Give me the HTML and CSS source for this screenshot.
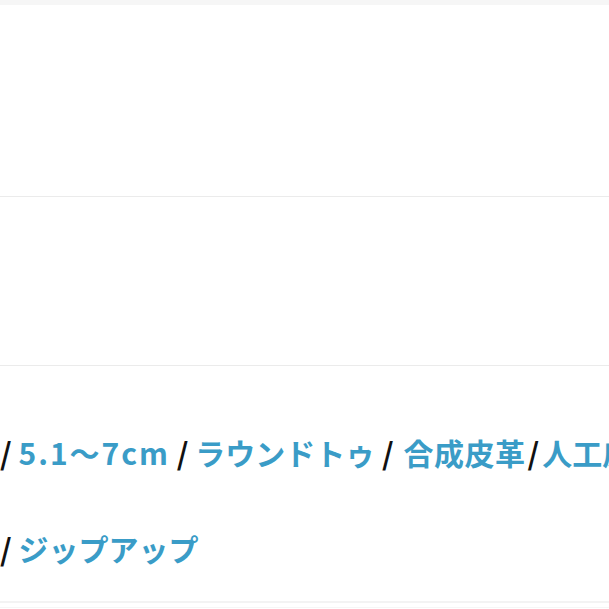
FILE: index.html
```html
<!DOCTYPE html>
<html lang="ja">
<head>
<meta charset="utf-8">
<link rel="stylesheet" href="styles.css">
</head>
<body>
<div class="topbar"></div>
<section class="block block-one"></section>
<section class="block block-two"></section>
<section class="specs">
  <p class="spec-line"><span class="sep">/</span> <span class="tag tag-latin">5.1〜7cm</span> <span class="sep">/</span> <span class="tag">ラウンドトゥ</span> <span class="sep">/</span> <span class="tag tag-wide">合成皮革</span><span class="sep sep-tight">/</span><span class="tag">人工皮革</span></p>
  <p class="spec-line"><span class="sep">/</span> <span class="tag">ジップアップ</span></p>
</section>
<div class="bottombar"></div>
<div class="bottomline"></div>
</body>
</html>
```
FILE: styles.css
```css
html, body {
  margin: 0;
  padding: 0;
  background: #ffffff;
  overflow: hidden;
}
body {
  width: 609px;
  height: 609px;
  font-family: "Noto Sans CJK JP", "Noto Sans", sans-serif;
}
.topbar {
  height: 5px;
  background: #f6f6f6;
}
.block {
  border-bottom: 1px solid #ebebeb;
}
.block-one {
  height: 191px;
}
.block-two {
  height: 168px;
}
.specs {
  height: 235px;
  overflow: hidden;
}
.spec-line {
  margin: 0;
  white-space: nowrap;
  font-size: 30px;
  font-weight: 700;
  line-height: 40px;
  color: #111111;
}
.spec-line:first-child {
  margin-top: 66px;
}
.spec-line + .spec-line {
  margin-top: 56px;
}
.tag {
  color: #3a9cc7;
}
.tag-latin {
  letter-spacing: 2px;
}
.tag-wide {
  margin-left: 3px;
  letter-spacing: 0.5px;
}
.sep {
  color: #111111;
}
.sep-tight {
  margin: 0 3px 0 2px;
}
.bottombar {
  height: 2px;
  background: #f3f3f3;
}
.bottomline {
  height: 1px;
  margin-top: 4px;
  background: #f6f6f6;
}
```
